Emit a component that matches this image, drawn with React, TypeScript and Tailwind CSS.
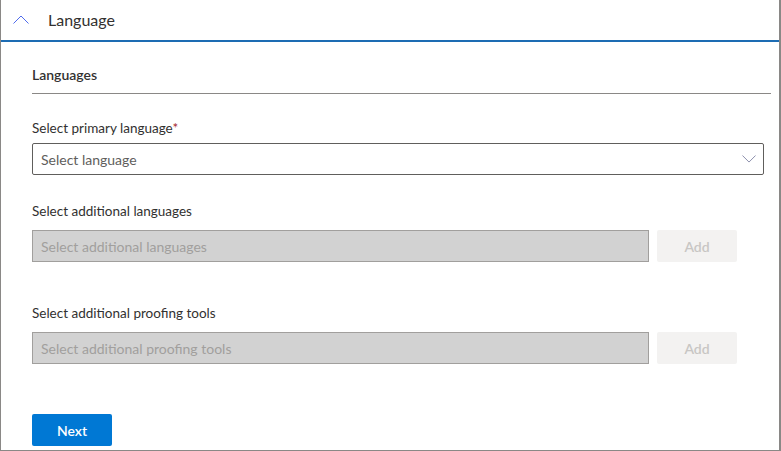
function Chevron({ up, className }: { up?: boolean; className?: string }) {
  return (
    <svg viewBox="0 0 16 9" className={className} fill="none" stroke="currentColor" strokeWidth={1}>
      {up ? <polyline points="0.5,8.5 8,1 15.5,8.5" /> : <polyline points="0.5,0.5 8,8 15.5,0.5" />}
    </svg>
  );
}

function Field({ label, placeholder }: { label: string; placeholder: string }) {
  return (
    <div>
      <p className="text-[13.5px] leading-[20px] text-[#323130]">{label}</p>
      <div className="mt-[9px] flex gap-2">
        <div className="flex h-[32px] w-[617px] items-center border border-[#a19f9d] bg-[#d2d2d2] px-[8px] text-[14px] text-[#a19f9d]">
          {placeholder}
        </div>
        <button
          disabled
          className="h-[32px] w-[80px] rounded-[2px] bg-[#f3f2f1] text-[14px] font-semibold text-[#c8c6c4]"
        >
          Add
        </button>
      </div>
    </div>
  );
}

export default function App() {
  return (
    <div
      className="h-[451px] w-[781px] bg-white"
      style={{ fontFamily: '"Segoe UI", Lato, "Open Sans", sans-serif' }}
    >
      <div className="flex h-[451px] w-[781px] flex-col border-x border-b border-[#8a8886] border-r-2">
        <div className="flex h-[42px] items-center gap-[19px] border-b-2 border-[#1d6cb3] pl-[12px]">
          <Chevron up className="mb-[2px] h-[9px] w-[16px] text-[#4f6bed]" />
          <span className="text-[16px] text-[#323130]">Language</span>
        </div>

        <div className="px-[31px]">
          <div className="mr-[-23px] border-b border-[#8a8886] pt-[24px] pb-[9px]">
            <p className="text-[14px] font-semibold leading-[18px] text-[#323130]">Languages</p>
          </div>

          <div className="mt-[24px]">
            <p className="text-[13.5px] leading-[20px] text-[#323130]">
              Select primary language<span className="text-[#a4262c]">*</span>
            </p>
            <div className="mt-[5px] flex h-[32px] w-[732px] items-center justify-between rounded-[2px] border border-[#605e5c] pl-[8px] pr-[7px] text-[14px] text-[#605e5c]">
              <span>Select language</span>
              <Chevron className="h-[8px] w-[14px] text-[#7b7fa0]" />
            </div>
          </div>

          <div className="mt-[26px]">
            <Field label="Select additional languages" placeholder="Select additional languages" />
          </div>

          <div className="mt-[41px]">
            <Field label="Select additional proofing tools" placeholder="Select additional proofing tools" />
          </div>

          <button className="mt-[50px] h-[32px] w-[80px] rounded-[2px] bg-[#0078d4] text-[14px] font-semibold text-white">
            Next
          </button>
        </div>
      </div>
    </div>
  );
}
